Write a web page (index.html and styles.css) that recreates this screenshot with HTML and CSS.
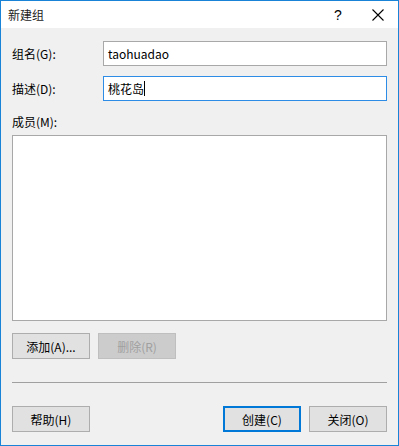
FILE: index.html
```html
<!DOCTYPE html>
<html lang="zh-CN">
<head>
    <meta charset="UTF-8">
    <title>新建组</title>
    <link rel="stylesheet" href="styles.css">
</head>
<body>
    <div class="dialog">
        <div class="titlebar">
            <span class="title">新建组</span>
            <span class="help">?</span>
            <span class="close">
                <svg width="12" height="12" viewBox="0 0 12 12"><path d="M0.5 0.5 L11.5 11.5 M11.5 0.5 L0.5 11.5" stroke="#000" stroke-width="1.1" fill="none"/></svg>
            </span>
        </div>
        <div class="content">
            <div class="field first">
                <label>组名(G):</label>
                <div class="input">taohuadao</div>
            </div>
            <div class="field">
                <label>描述(D):</label>
                <div class="input focused">桃花岛<span class="caret"></span></div>
            </div>
            <div class="members-label">成员(M):</div>
            <div class="members"></div>
            <div class="actions">
                <button class="btn">添加(A)...</button>
                <button class="btn" disabled>删除(R)</button>
            </div>
            <hr class="separator">
            <div class="footer">
                <button class="btn">帮助(H)</button>
                <span class="spacer"></span>
                <button class="btn default">创建(C)</button>
                <button class="btn">关闭(O)</button>
            </div>
        </div>
    </div>
</body>
</html>
```

FILE: styles.css
```css
body {
    margin: 0;
    font-family: "Noto Sans CJK SC", "Noto Sans", sans-serif;
    font-size: 12px;
    color: #000;
}
.dialog {
    width: 399px;
    height: 446px;
    box-sizing: border-box;
    border: 1px solid #1883d7;
    background-color: #f0f0f0;
    display: flex;
    flex-direction: column;
}
.titlebar {
    height: 27px;
    background-color: #fff;
    display: flex;
    align-items: center;
    padding-left: 7px;
}
.title {
    flex: 1;
    color: #222;
}
.help {
    width: 14px;
    font-family: "Liberation Sans", sans-serif;
    font-size: 14px;
    margin-right: 24px;
}
.close {
    display: flex;
    margin-right: 14px;
}
.content {
    padding: 0 11px;
    display: flex;
    flex-direction: column;
}
.field {
    display: flex;
    align-items: center;
    margin-top: 10px;
}
.field.first {
    margin-top: 13px;
}
.field label {
    width: 91px;
}
.input {
    flex: 1;
    height: 25px;
    box-sizing: border-box;
    border: 1px solid #a8a8a8;
    background-color: #fff;
    padding-left: 4px;
    display: flex;
    align-items: center;
}
.input.focused {
    border-color: #2c8ce6;
}
.caret {
    display: inline-block;
    width: 1px;
    height: 15px;
    background-color: #000;
}
.members-label {
    margin-top: 12px;
    height: 22px;
}
.members {
    height: 186px;
    box-sizing: border-box;
    border: 1px solid #a8a8a8;
    background-color: #fff;
}
.actions {
    display: flex;
    gap: 8px;
    margin-top: 12px;
}
.btn {
    width: 78px;
    height: 26px;
    box-sizing: border-box;
    border: 1px solid #adadad;
    background-color: #e1e1e1;
    font-family: "Noto Sans CJK SC", "Noto Sans", sans-serif;
    font-size: 12px;
    color: #000;
    padding: 0;
}
.btn:disabled {
    background-color: #cccccc;
    border-color: #bfbfbf;
    color: #a0a0a0;
}
.btn.default {
    border: 2px solid #0078d7;
}
.separator {
    margin: 23px 0 0 0;
    border: none;
    border-top: 1px solid #a0a0a0;
    height: 0;
}
.footer {
    display: flex;
    gap: 8px;
    margin-top: 23px;
}
.spacer {
    flex: 1;
}
```
